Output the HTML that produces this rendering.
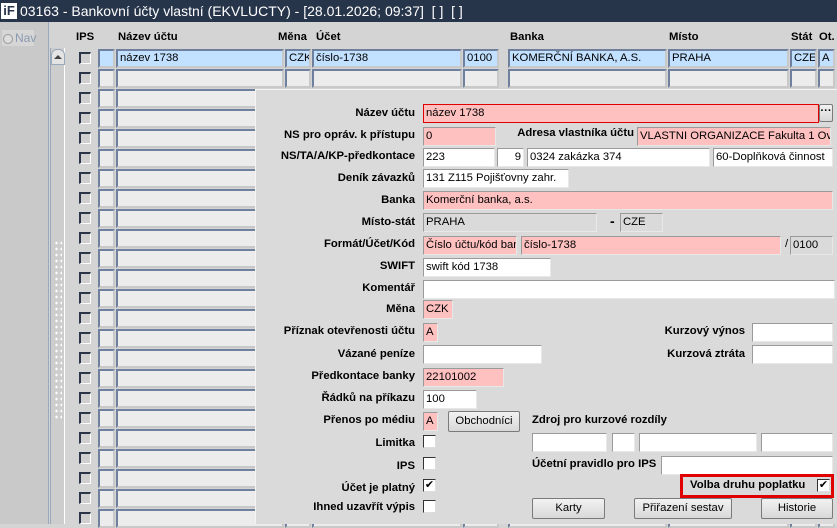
<!DOCTYPE html>
<html><head><meta charset="utf-8"><style>
*{box-sizing:border-box;margin:0;padding:0}
body{width:837px;height:524px;overflow:hidden;background:#d4d4d4;font-family:"Liberation Sans",Arial,sans-serif;font-size:11.3px;position:relative;color:#000}
.a{position:absolute}
#title{left:0;top:0;width:837px;height:22px;background:#27354b;color:#fff;font-size:14px;line-height:22px;padding-left:20px;white-space:nowrap}
#logo{left:1px;top:3px;width:16px;height:16px;background:#fff;color:#27354b;font-weight:bold;font-size:13px;line-height:16px;text-align:center}
#nav{left:0;top:22px;width:49px;height:502px;background:#c9c9c9;border-right:1px solid #9aa8bc}
.c{position:absolute;height:19px;border:2px solid #6e809e;border-right-color:#c8c8c8;border-bottom-color:#c8c8c8;background:#ececec;line-height:15px;padding-left:2px;white-space:nowrap;overflow:hidden}
.sel{background:#c2e0ff}
.cb{position:absolute;width:12px;height:12px;border-top:2px solid #2a3648;border-left:2px solid #2a3648;border-right:1px solid #fff;border-bottom:1px solid #fff;background:#cfcfcf}
.h{position:absolute;top:31px;font-weight:bold}
#panel{left:255px;top:89px;width:582px;height:435px;background:#dadada;border-left:1px solid #f4f4f4;border-top:1px solid #f4f4f4}
.l{position:absolute;font-weight:bold;text-align:right;white-space:nowrap}
.f{position:absolute;height:19px;background:#fff;border:1px solid #9a9a9a;border-right-color:#e8e8e8;border-bottom-color:#e8e8e8;padding-left:2px;line-height:17px;white-space:nowrap;overflow:hidden}
.p{background:#ffc0c0}
.g{background:#dadada}
.k{position:absolute;width:13px;height:13px;background:#fff;border:1px solid #333;border-right-color:#ddd;border-bottom-color:#ddd;font-size:11px;line-height:11px;text-align:center}
.b{position:absolute;height:21px;border:1px solid #7a7a7a;background:linear-gradient(#f2f2f2,#d8d8d8);text-align:center;line-height:19px;border-radius:2px}
</style></head><body>
<div id="title" class="a">03163 - Bankovní účty vlastní (EKVLUCTY) - [28.01.2026; 09:37]&nbsp; [ ]&nbsp; [ ]</div>
<div id="logo" class="a">iF</div>
<div id="nav" class="a"></div>
<div class="a" style="left:2px;top:30px;width:32px;height:16px;background:#d6d6d6"></div>
<div class="a" style="left:3px;top:34px;width:10px;height:10px;border-radius:50%;border:1px solid #999;background:#ddd"></div>
<div class="a" style="left:15px;top:31px;color:#8a9ab0;font-size:12px">Nav</div>
<div class="a" style="left:50px;top:48px;width:15px;height:476px;background:#cdcdcd;border-left:1px solid #9aa8bc;border-right:1px solid #fff"></div>
<div class="a" style="left:51px;top:49px;width:14px;height:16px;background:#e4e4e4;border:1px solid #9aa8bc;border-radius:6px 6px 0 0"></div>
<div class="a" style="left:54px;top:55px;width:0;height:0;border-left:4px solid transparent;border-right:4px solid transparent;border-bottom:4px solid #444"></div>
<div class="a" style="left:54px;top:240px;width:8px;height:180px;background-image:radial-gradient(#fff 1px,transparent 1.2px);background-size:5px 6px"></div>
<div class="h" style="left:76px">IPS</div>
<div class="h" style="left:118px">Název účtu</div>
<div class="h" style="left:278px">Měna</div>
<div class="h" style="left:316px">Účet</div>
<div class="h" style="left:510px">Banka</div>
<div class="h" style="left:669px">Místo</div>
<div class="h" style="left:791px">Stát</div>
<div class="h" style="left:819px">Ot.</div>
<div id="grid"></div>
<div id="panel" class="a"></div>

<div class="l" style="right:422px;top:107px">Název účtu</div>
<div class="f p" style="left:423px;top:104px;width:396px;border:1px solid #e00000">název 1738</div>
<div class="b" style="left:819px;top:104px;width:14px;height:18px;line-height:12px;font-weight:bold">···</div>

<div class="l" style="right:422px;top:129px">NS pro opráv. k přístupu</div>
<div class="f p" style="left:423px;top:127px;width:73px">0</div>
<div class="l" style="right:203px;top:127px">Adresa vlastníka účtu</div>
<div class="f p" style="left:637px;top:127px;width:194px">VLASTNI ORGANIZACE Fakulta 1 Ovoc</div>

<div class="l" style="right:422px;top:150px">NS/TA/A/KP-předkontace</div>
<div class="f" style="left:423px;top:148px;width:72px">223</div>
<div class="f" style="left:497px;top:148px;width:27px;text-align:right;padding-right:2px">9</div>
<div class="f" style="left:527px;top:148px;width:183px">0324 zakázka 374</div>
<div class="f" style="left:713px;top:148px;width:120px">60-Doplňková činnost</div>

<div class="l" style="right:422px;top:172px">Deník závazků</div>
<div class="f" style="left:423px;top:169px;width:146px">131 Z115 Pojišťovny zahr.</div>

<div class="l" style="right:422px;top:194px">Banka</div>
<div class="f p" style="left:423px;top:191px;width:410px">Komerční banka, a.s.</div>

<div class="l" style="right:422px;top:216px">Místo-stát</div>
<div class="f g" style="left:423px;top:213px;width:174px">PRAHA</div>
<div class="a" style="left:610px;top:213px;font-weight:bold;font-size:14px">-</div>
<div class="f g" style="left:620px;top:213px;width:43px">CZE</div>

<div class="l" style="right:422px;top:238px">Formát/Účet/Kód</div>
<div class="f p" style="left:423px;top:236px;width:94px">Číslo účtu/kód ban</div>
<div class="f p" style="left:521px;top:236px;width:260px">číslo-1738</div>
<div class="a" style="left:785px;top:238px">/</div>
<div class="f g" style="left:790px;top:236px;width:43px">0100</div>

<div class="l" style="right:422px;top:260px">SWIFT</div>
<div class="f" style="left:423px;top:258px;width:128px">swift kód 1738</div>

<div class="l" style="right:422px;top:282px">Komentář</div>
<div class="f" style="left:423px;top:280px;width:412px"></div>

<div class="l" style="right:422px;top:303px">Měna</div>
<div class="f p" style="left:423px;top:300px;width:30px">CZK</div>

<div class="l" style="right:422px;top:325px">Příznak otevřenosti účtu</div>
<div class="f p" style="left:423px;top:323px;width:15px">A</div>
<div class="l" style="right:92px;top:325px">Kurzový výnos</div>
<div class="f" style="left:752px;top:323px;width:81px"></div>

<div class="l" style="right:422px;top:348px">Vázané peníze</div>
<div class="f" style="left:423px;top:345px;width:119px"></div>
<div class="l" style="right:92px;top:348px">Kurzová ztráta</div>
<div class="f" style="left:752px;top:345px;width:81px"></div>

<div class="l" style="right:422px;top:370px">Předkontace banky</div>
<div class="f p" style="left:423px;top:368px;width:81px">22101002</div>

<div class="l" style="right:422px;top:392px">Řádků na příkazu</div>
<div class="f" style="left:423px;top:390px;width:54px">100</div>

<div class="l" style="right:422px;top:414px">Přenos po médiu</div>
<div class="f p" style="left:423px;top:412px;width:15px">A</div>
<div class="b" style="left:448px;top:411px;width:72px">Obchodníci</div>
<div class="l" style="left:532px;top:414px;text-align:left">Zdroj pro kurzové rozdíly</div>

<div class="l" style="right:422px;top:437px">Limitka</div>
<div class="k" style="left:423px;top:435px"></div>
<div class="f" style="left:532px;top:433px;width:75px"></div>
<div class="f" style="left:612px;top:433px;width:23px"></div>
<div class="f" style="left:639px;top:433px;width:118px"></div>
<div class="f" style="left:761px;top:433px;width:72px"></div>

<div class="l" style="right:422px;top:460px">IPS</div>
<div class="k" style="left:423px;top:457px"></div>
<div class="l" style="left:532px;top:458px;text-align:left">Účetní pravidlo pro IPS</div>
<div class="f" style="left:661px;top:456px;width:172px"></div>

<div class="l" style="right:422px;top:482px">Účet je platný</div>
<div class="k" style="left:423px;top:479px">✔</div>
<div class="a" style="left:680px;top:474px;width:154px;height:24px;border:3px solid #e00000"></div>
<div class="l" style="left:690px;top:479px;text-align:left">Volba druhu poplatku</div>
<div class="k" style="left:817px;top:479px">✔</div>

<div class="l" style="right:422px;top:501px">Ihned uzavřít výpis</div>
<div class="k" style="left:423px;top:500px"></div>
<div class="b" style="left:532px;top:498px;width:73px">Karty</div>
<div class="b" style="left:634px;top:498px;width:98px">Přiřazení sestav</div>
<div class="b" style="left:761px;top:498px;width:72px">Historie</div>

<script>
var g=document.getElementById('grid'),h='';
var cols=[[98,17],[116,168],[285,26],[312,150],[463,36],[508,159],[668,121],[790,27],[818,17]];
var t=['','název 1738','CZK','číslo-1738','0100','KOMERČNÍ BANKA, A.S.','PRAHA','CZE','A'];
for(var r=0;r<24;r++){var y=49+r*20;
h+='<div class="cb" style="left:79px;top:'+(y+3)+'px"></div>';
for(var i=0;i<cols.length;i++){h+='<div class="c'+(r==0?' sel':'')+'" style="left:'+cols[i][0]+'px;top:'+y+'px;width:'+cols[i][1]+'px">'+(r==0?t[i]:'')+'</div>';}}
g.innerHTML=h;
</script>
</body></html>
